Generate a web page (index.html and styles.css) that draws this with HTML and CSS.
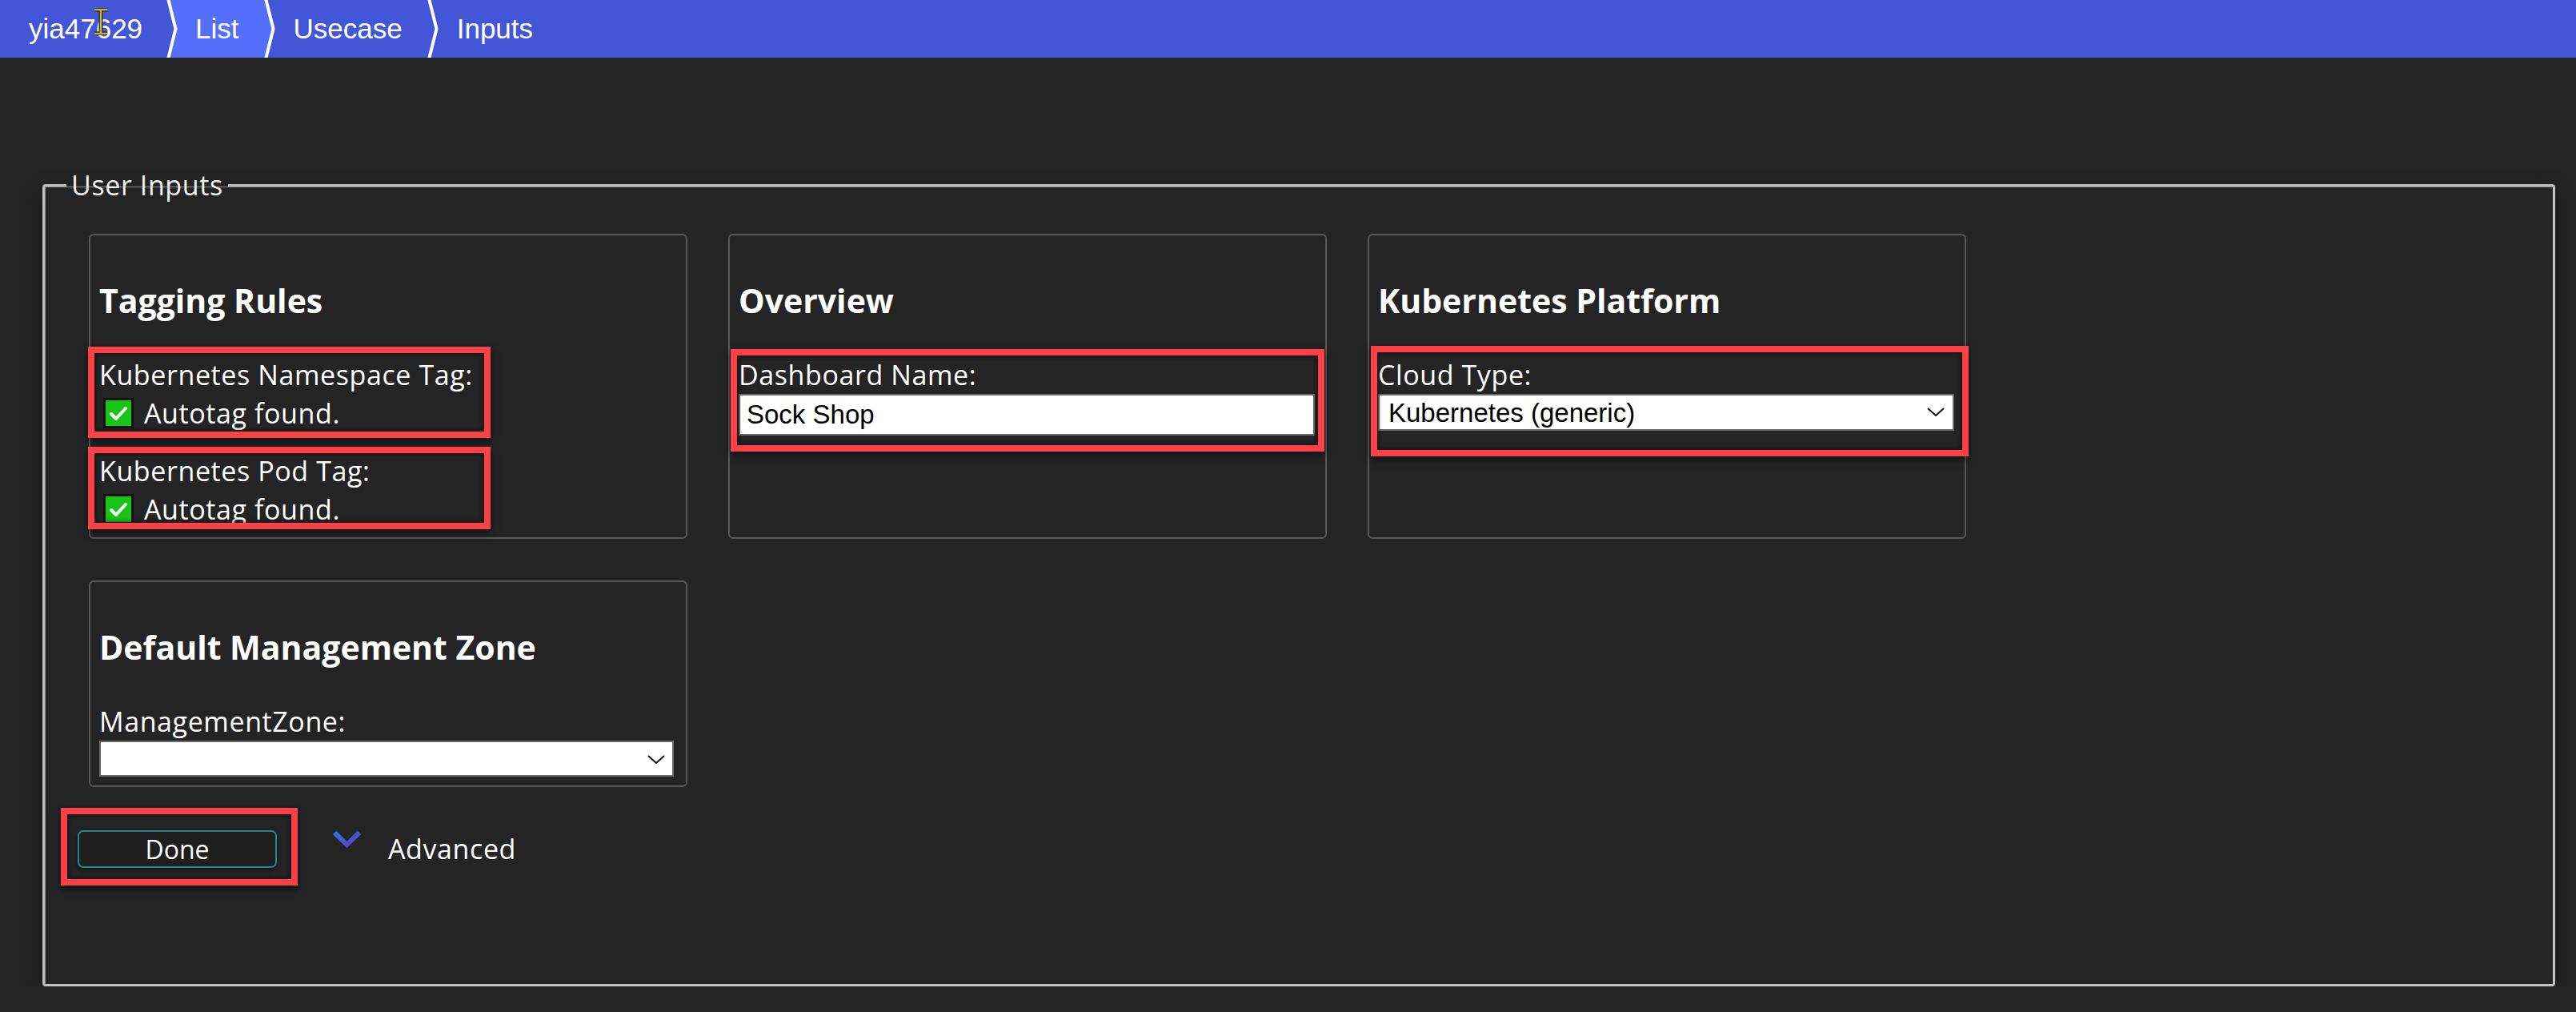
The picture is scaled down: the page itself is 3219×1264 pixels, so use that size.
FILE: index.html
```html
<!DOCTYPE html>
<html lang="en">
<head>
<meta charset="utf-8">
<title>Inputs</title>
<link rel="stylesheet" href="styles.css">
</head>
<body>
<header class="crumbs">
  <span class="crumb first">yia47629</span>
  <svg class="sep" viewBox="0 0 16 72" width="16" height="72"><polygon points="3,0 16,0 16,72 3,72 12.5,36" fill="#5470fa"/><polyline points="3,-2 12.5,36 3,74" fill="none" stroke="#fff" stroke-width="4"/></svg>
  <span class="crumb active">List</span>
  <svg class="sep" viewBox="0 0 16 72" width="16" height="72"><polygon points="0,0 3,0 12.5,36 3,72 0,72" fill="#5470fa"/><polyline points="3,-2 12.5,36 3,74" fill="none" stroke="#fff" stroke-width="4"/></svg>
  <span class="crumb">Usecase</span>
  <svg class="sep" viewBox="0 0 16 72" width="16" height="72"><polyline points="3,-2 12.5,36 3,74" fill="none" stroke="#fff" stroke-width="4"/></svg>
  <span class="crumb">Inputs</span>
  <svg class="cursor" viewBox="0 0 20 34" width="20" height="34"><path d="M2 2 H18 M10 2 V32 M2 32 H18" fill="none" stroke="#222" stroke-width="5"/><path d="M2 2 H18 M10 2 V32 M2 32 H18" fill="none" stroke="#c9b230" stroke-width="2.5"/></svg>
</header>

<main class="page">
  <fieldset class="inputs">
    <legend>User Inputs</legend>
    <div class="inputs-body">
      <div class="cards">
        <section class="card">
          <h3 class="card-title">Tagging Rules</h3>
          <div class="group">
            <div class="label">Kubernetes Namespace Tag:</div>
            <div class="check-row"><span class="check"><svg viewBox="0 0 32 32" width="32" height="32"><polyline points="7,17 13,23 25,10" fill="none" stroke="#fff" stroke-width="4" stroke-linecap="round" stroke-linejoin="round"/></svg></span><span>Autotag found.</span></div>
          </div>
          <div class="group">
            <div class="label">Kubernetes Pod Tag:</div>
            <div class="check-row"><span class="check"><svg viewBox="0 0 32 32" width="32" height="32"><polyline points="7,17 13,23 25,10" fill="none" stroke="#fff" stroke-width="4" stroke-linecap="round" stroke-linejoin="round"/></svg></span><span>Autotag found.</span></div>
          </div>
          <div class="annot annot-ns"></div>
          <div class="annot annot-pod"></div>
        </section>

        <section class="card">
          <h3 class="card-title">Overview</h3>
          <div class="label">Dashboard Name:</div>
          <input class="text-input" type="text" value="Sock Shop">
          <div class="annot annot-dash"></div>
        </section>

        <section class="card">
          <h3 class="card-title">Kubernetes Platform</h3>
          <div class="label">Cloud Type:</div>
          <div class="select-wrap select-cloud">
            <select class="select"><option>Kubernetes (generic)</option></select>
            <svg class="select-arrow" viewBox="0 0 22 11" width="22" height="11"><polyline points="1,1 11,10 21,1" fill="none" stroke="#111" stroke-width="2"/></svg>
          </div>
          <div class="annot annot-cloud"></div>
        </section>

        <section class="card">
          <h3 class="card-title">Default Management Zone</h3>
          <div class="label">ManagementZone:</div>
          <div class="select-wrap select-zone">
            <select class="select"><option></option></select>
            <svg class="select-arrow" viewBox="0 0 22 11" width="22" height="11"><polyline points="1,1 11,10 21,1" fill="none" stroke="#111" stroke-width="2"/></svg>
          </div>
        </section>
      </div>

      <div class="actions">
        <div class="done-wrap">
          <button class="done" type="button">Done</button>
          <div class="annot annot-done"></div>
        </div>
        <svg class="adv-icon" viewBox="0 0 37 22" width="37" height="22">
          <defs><linearGradient id="advg" x1="0" y1="0" x2="1" y2="1"><stop offset="0" stop-color="#3473e4"/><stop offset="1" stop-color="#5b3cbf"/></linearGradient></defs>
          <polyline points="3,3 18.5,18 34,3" fill="none" stroke="url(#advg)" stroke-width="6"/>
        </svg>
        <span class="adv-label">Advanced</span>
      </div>
    </div>
  </fieldset>
</main>
</body>
</html>
```

FILE: styles.css
```css
html, body {
  margin: 0;
  padding: 0;
}
body {
  background: #242424;
  color: #ffffff;
  font-family: "Open Sans", "Noto Sans", sans-serif;
  overflow: hidden;
}

/* breadcrumb header */
.crumbs {
  position: relative;
  display: flex;
  align-items: stretch;
  height: 72px;
  background: #4456d8;
  font-family: "Liberation Sans", Arial, sans-serif;
  font-size: 35px;
  line-height: 72px;
  color: #ffffff;
}
.crumb {
  padding: 0 30px 0 22px;
  white-space: nowrap;
}
.crumb.first {
  padding-left: 36px;
  padding-right: 29px;
}
.crumb.active {
  padding-left: 21px;
  background: #5470fa;
}
.sep {
  display: block;
  flex: none;
}
.cursor {
  position: absolute;
  left: 116px;
  top: 10px;
}

/* fieldset */
.page {
  padding-top: 137px;
}
.inputs {
  margin: 0 26px 0 53px;
  padding: 0;
  min-width: 0;
  border: 3px solid #c4c4c4;
  border-top-color: #bdbdbd;
  border-left-color: #bdbdbd;
  border-radius: 4px;
  box-shadow: 0 8px 24px rgba(0, 0, 0, 0.35), inset 1px 1px 0 #8a8a8a;
}
.inputs legend {
  margin-left: 27px;
  padding: 0 6px;
  font-size: 34px;
  line-height: 44px;
  letter-spacing: 0.6px;
  color: #f2f2f2;
}
.inputs-body {
  padding: 39px 0 145px 0;
}

/* cards */
.cards {
  display: grid;
  grid-template-columns: repeat(3, 748px);
  column-gap: 51px;
  row-gap: 52px;
  padding-left: 55px;
}
.card {
  position: relative;
  border: 2px solid #585858;
  border-radius: 6px;
  padding: 53px 12px 11px 11px;
}
.card-title {
  margin: 0 0 41px 0;
  font-size: 41px;
  line-height: 56px;
  font-weight: 700;
  color: #ffffff;
}
.label {
  font-size: 34px;
  line-height: 48px;
  letter-spacing: 0.6px;
  color: #ffffff;
  white-space: nowrap;
}
.group + .group {
  margin-top: 24px;
}
.check-row {
  display: flex;
  align-items: center;
  height: 48px;
  font-size: 34px;
  line-height: 48px;
  letter-spacing: 0.6px;
  gap: 13px;
}
.check {
  box-sizing: border-box;
  width: 38px;
  height: 38px;
  margin-left: 5px;
  border: 3px solid #121212;
  background: #18c418;
  display: flex;
}
.check svg {
  display: block;
}

/* fields */
.text-input {
  display: block;
  box-sizing: border-box;
  width: 720px;
  height: 52px;
  margin: 0;
  padding: 0 8px;
  border: 2px solid #6a6a6a;
  background: #ffffff;
  color: #000000;
  font-family: "Liberation Sans", Arial, sans-serif;
  font-size: 33px;
  outline: none;
}
.select-wrap {
  position: relative;
  width: 720px;
}
.select-zone {
  width: 718px;
}
.select {
  display: block;
  box-sizing: border-box;
  width: 100%;
  margin: 0;
  padding: 0 40px 0 11px;
  border: 2px solid #6a6a6a;
  border-radius: 0;
  background: #ffffff;
  color: #000000;
  font-family: "Liberation Sans", Arial, sans-serif;
  font-size: 33px;
  -webkit-appearance: none;
  appearance: none;
}
.select-cloud .select {
  height: 46px;
}
.select-zone .select {
  height: 45px;
}
.select-arrow {
  position: absolute;
  right: 12px;
  top: 17px;
  pointer-events: none;
}
.select-zone .select-arrow {
  right: 11px;
  top: 18px;
}

/* red annotation overlays */
.annot {
  position: absolute;
  box-sizing: border-box;
  border: 8px solid #fc4146;
  box-shadow: 0 4px 9px rgba(0, 0, 0, 0.55), inset 0 0 6px rgba(0, 0, 0, 0.75);
  pointer-events: none;
  z-index: 2;
}
.annot-ns {
  left: -3px;
  top: 139px;
  width: 503px;
  height: 114px;
}
.annot-pod {
  left: -3px;
  top: 264px;
  width: 503px;
  height: 103px;
}
.annot-dash {
  left: 1px;
  top: 142px;
  width: 742px;
  height: 128px;
}
.annot-cloud {
  left: 2px;
  top: 138px;
  width: 747px;
  height: 138px;
}

/* actions */
.actions {
  display: flex;
  align-items: flex-start;
  margin-top: 54px;
  padding-left: 41px;
}
.done-wrap {
  position: relative;
}
.done {
  display: block;
  box-sizing: border-box;
  width: 249px;
  height: 47px;
  margin: 0;
  padding: 0;
  border: 2px solid #1f8891;
  border-radius: 7px;
  background: #1e1e1e;
  color: #ffffff;
  font-family: "Open Sans", "Noto Sans", sans-serif;
  font-size: 32px;
  line-height: 43px;
  box-shadow: 0 3px 6px rgba(0, 0, 0, 0.5);
}
.annot-done {
  left: -21px;
  top: -28px;
  width: 296px;
  height: 97px;
}
.adv-icon {
  display: block;
  margin-left: 69px;
}
.adv-label {
  margin-left: 33px;
  margin-top: -1px;
  font-size: 34px;
  line-height: 48px;
  letter-spacing: 0.6px;
  color: #ffffff;
}
```
